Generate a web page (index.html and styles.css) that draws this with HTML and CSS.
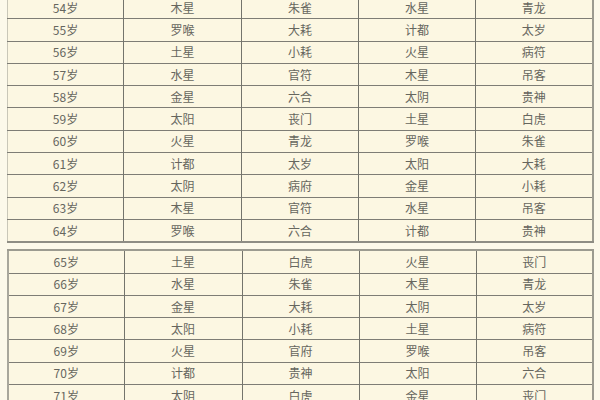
FILE: index.html
```html
<!DOCTYPE html>
<html lang="zh">
<head>
<meta charset="utf-8">
<link rel="stylesheet" href="styles.css">
</head>
<body>
<div class="page">
<table class="tbl">
<colgroup><col class="c1"><col class="c2"><col class="c3"><col class="c4"><col class="c5"></colgroup>
<tr><td>54岁</td><td>木星</td><td>朱雀</td><td>水星</td><td>青龙</td></tr>
<tr><td>55岁</td><td>罗喉</td><td>大耗</td><td>计都</td><td>太岁</td></tr>
<tr><td>56岁</td><td>土星</td><td>小耗</td><td>火星</td><td>病符</td></tr>
<tr><td>57岁</td><td>水星</td><td>官符</td><td>木星</td><td>吊客</td></tr>
<tr><td>58岁</td><td>金星</td><td>六合</td><td>太阴</td><td>贵神</td></tr>
<tr><td>59岁</td><td>太阳</td><td>丧门</td><td>土星</td><td>白虎</td></tr>
<tr><td>60岁</td><td>火星</td><td>青龙</td><td>罗喉</td><td>朱雀</td></tr>
<tr><td>61岁</td><td>计都</td><td>太岁</td><td>太阳</td><td>大耗</td></tr>
<tr><td>62岁</td><td>太阴</td><td>病府</td><td>金星</td><td>小耗</td></tr>
<tr><td>63岁</td><td>木星</td><td>官符</td><td>水星</td><td>吊客</td></tr>
<tr><td>64岁</td><td>罗喉</td><td>六合</td><td>计都</td><td>贵神</td></tr>
</table>
<table class="tbl second">
<colgroup><col class="c1"><col class="c2"><col class="c3"><col class="c4"><col class="c5"></colgroup>
<tr><td>65岁</td><td>土星</td><td>白虎</td><td>火星</td><td>丧门</td></tr>
<tr><td>66岁</td><td>水星</td><td>朱雀</td><td>木星</td><td>青龙</td></tr>
<tr><td>67岁</td><td>金星</td><td>大耗</td><td>太阴</td><td>太岁</td></tr>
<tr><td>68岁</td><td>太阳</td><td>小耗</td><td>土星</td><td>病符</td></tr>
<tr><td>69岁</td><td>火星</td><td>官府</td><td>罗喉</td><td>吊客</td></tr>
<tr><td>70岁</td><td>计都</td><td>贵神</td><td>太阳</td><td>六合</td></tr>
<tr><td>71岁</td><td>太阴</td><td>白虎</td><td>金星</td><td>丧门</td></tr>
</table>
</div>
</body>
</html>
```
FILE: styles.css
```css
html, body {
  margin: 0;
  padding: 0;
  background: #fcf9ea;
  overflow: hidden;
}
.page {
  width: 600px;
  height: 400px;
  overflow: hidden;
  padding-left: 7px;
  box-sizing: border-box;
}
.tbl {
  border-collapse: collapse;
  table-layout: fixed;
  width: 586px;
  margin-top: -3px;
  background: #fcf7e2;
  font-family: "Noto Sans CJK SC", "Liberation Sans", sans-serif;
  font-size: 12px;
  color: #66665e;
  border-left: 1px solid #c9c7b8;
  border-right: 2px solid #9c9b90;
  border-bottom: 2px solid #8e8d84;
}
.tbl.second {
  margin-top: 6px;
  border-top: 2px solid #9c9b90;
  border-left: 2px solid #a8a79c;
  border-right: 2px solid #9c9b90;
}
.c1 { width: 116px; }
.c2 { width: 118px; }
.c3 { width: 117px; }
.c4 { width: 117px; }
.c5 { width: 117px; }
.tbl td {
  height: 21.3px;
  padding: 0;
  text-align: center;
  vertical-align: middle;
  line-height: 14px;
  border-top: 1px solid #7a7a72;
  border-left: 1px solid #74746c;
}
.tbl td:first-child {
  border-left: none;
}
.tbl tr:first-child td {
  border-top: none;
}
.tbl tr td {
  border-bottom: 0;
}
.tbl tr + tr td {
  border-top: 1.5px solid #7e7d75;
}
```
